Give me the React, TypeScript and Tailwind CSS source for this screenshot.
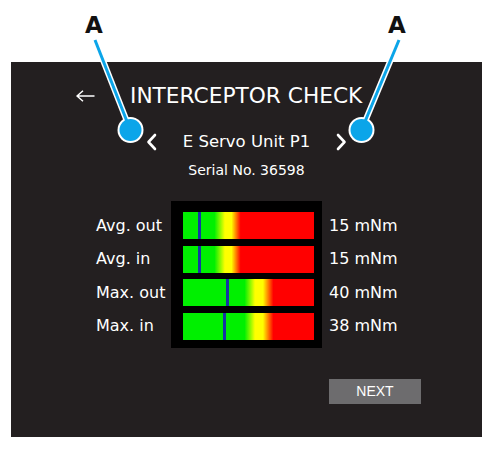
import React from "react";

type Reading = {
  label: string;
  value: string;
  marker: number; // px from left edge of bar
  scale: "low" | "high";
};

const readings: Reading[] = [
  { label: "Avg. out", value: "15 mNm", marker: 15, scale: "low" },
  { label: "Avg. in", value: "15 mNm", marker: 15, scale: "low" },
  { label: "Max. out", value: "40 mNm", marker: 43, scale: "high" },
  { label: "Max. in", value: "38 mNm", marker: 40, scale: "high" },
];

function Chevron({ dir }: { dir: "left" | "right" }) {
  return (
    <svg width="11" height="18" viewBox="0 0 11 18" fill="none">
      <path
        d={dir === "left" ? "M9 2 L2.5 9 L9 16" : "M2 2 L8.5 9 L2 16"}
        stroke="white"
        strokeWidth="2.6"
        strokeLinecap="round"
        strokeLinejoin="round"
      />
    </svg>
  );
}

function Callouts() {
  return (
    <svg
      className="absolute left-0 top-0 pointer-events-none"
      width="499"
      height="452"
      viewBox="0 0 499 452"
    >
      <text
        x="94"
        y="33"
        textAnchor="middle"
        fontFamily="'DejaVu Sans', sans-serif"
        fontWeight="bold"
        fontSize="23"
        fill="#111"
      >
        A
      </text>
      <text
        x="397"
        y="33"
        textAnchor="middle"
        fontFamily="'DejaVu Sans', sans-serif"
        fontWeight="bold"
        fontSize="23"
        fill="#111"
      >
        A
      </text>
      <line x1="95" y1="40" x2="128" y2="124" stroke="white" strokeWidth="6" />
      <line x1="399" y1="40" x2="364" y2="124" stroke="white" strokeWidth="6" />
      <circle cx="130.5" cy="130" r="13" fill="white" />
      <circle cx="361.5" cy="130" r="13" fill="white" />
      <line x1="95" y1="40" x2="128" y2="124" stroke="#0ba5e9" strokeWidth="3" />
      <line x1="399" y1="40" x2="364" y2="124" stroke="#0ba5e9" strokeWidth="3" />
      <circle cx="130.5" cy="130" r="11" fill="#0ba5e9" />
      <circle cx="361.5" cy="130" r="11" fill="#0ba5e9" />
    </svg>
  );
}

export default function App() {
  return (
    <div className="relative w-[499px] h-[452px] bg-white overflow-hidden">
      <div className="ml-[11px] mt-[62px] w-[471px] h-[375px] bg-[#231f20] text-white font-['DejaVu_Sans',sans-serif] flex flex-col pt-[21px]">
        {/* Header */}
        <div className="flex items-center pl-[65px] h-[26px]">
          <svg width="19" height="12" viewBox="0 0 19 12" fill="none">
            <path
              d="M1 6 H18.5 M7 0.8 L1 6 L7 11.2"
              stroke="white"
              strokeWidth="1.5"
              strokeLinejoin="round"
            />
          </svg>
          <h1 className="ml-[35px] text-[21.7px] leading-[26px]">
            INTERCEPTOR CHECK
          </h1>
        </div>

        {/* Unit selector */}
        <div className="mt-[22px] flex items-center justify-center gap-[26px] h-[22px]">
          <Chevron dir="left" />
          <span className="text-[16.5px] leading-[22px]">E Servo Unit P1</span>
          <Chevron dir="right" />
        </div>
        <div className="mt-[8px] text-center text-[14px] leading-[18px]">
          Serial No. 36598
        </div>

        {/* Readings */}
        <div className="mt-[22px] flex">
          <div className="ml-[85px] w-[75px] flex flex-col gap-[6.5px] pt-[11px]">
            {readings.map((r) => (
              <div key={r.label} className="h-[27px] flex items-center text-[16px]">
                {r.label}
              </div>
            ))}
          </div>
          <div className="w-[151px] bg-black flex flex-col gap-[6.5px] pt-[11px] pb-[8px] pl-[12px] pr-[8px]">
            {readings.map((r) => (
              <div
                key={r.label}
                className={
                  r.scale === "low"
                    ? "relative h-[27px] bg-[linear-gradient(to_right,#00f000_0%,#00f000_24%,#ffff00_32%,#ffff00_37%,#ff0000_44%,#ff0000_100%)]"
                    : "relative h-[27px] bg-[linear-gradient(to_right,#00f000_0%,#00f000_47%,#ffff00_55%,#ffff00_61%,#ff0000_69%,#ff0000_100%)]"
                }
              >
                <div
                  className="absolute top-0 h-full w-[3px] bg-[#1535a5]"
                  style={{ left: r.marker }}
                />
              </div>
            ))}
          </div>
          <div className="ml-[7px] flex flex-col gap-[6.5px] pt-[11px]">
            {readings.map((r) => (
              <div key={r.label} className="h-[27px] flex items-center text-[16px]">
                {r.value}
              </div>
            ))}
          </div>
        </div>

        {/* Footer */}
        <div className="mt-[31px] flex justify-end pr-[61px]">
          <button className="w-[92px] h-[25px] bg-[#6d6c6e] text-white text-[14px] font-['Liberation_Sans',Arial,sans-serif]">
            NEXT
          </button>
        </div>
      </div>
      <Callouts />
    </div>
  );
}
